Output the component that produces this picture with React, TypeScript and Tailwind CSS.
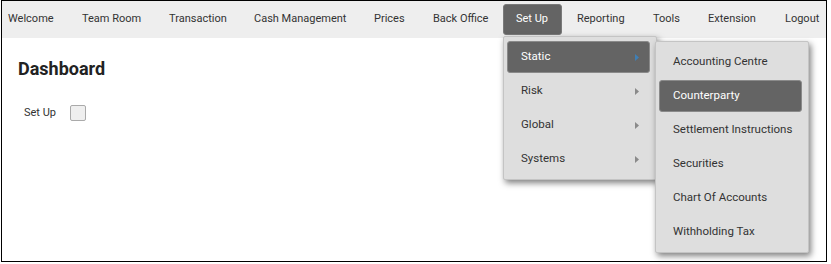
import React from "react";

const navItems = [
  { label: "Welcome", w: "w-[74px]" },
  { label: "Team Room", w: "w-[87px]" },
  { label: "Transaction", w: "w-[85px]" },
  { label: "Cash Management", w: "w-[120px]" },
  { label: "Prices", w: "w-[59px]" },
  { label: "Back Office", w: "w-[71px]" },
];

const navRight = [
  { label: "Reporting", w: "w-[76px]" },
  { label: "Tools", w: "w-[55px]" },
  { label: "Extension", w: "w-[77px]" },
  { label: "Logout", w: "w-[40px]" },
];

const mainMenu = ["Static", "Risk", "Global", "Systems"];
const staticMenu = [
  "Accounting Centre",
  "Counterparty",
  "Settlement Instructions",
  "Securities",
  "Chart Of Accounts",
  "Withholding Tax",
];

function Arrow({ active }: { active?: boolean }) {
  return (
    <svg width="4" height="7" viewBox="0 0 4 7" className="shrink-0">
      <path d="M0 0 L4 3.5 L0 7 Z" fill={active ? "#3f7fb5" : "#8a8a8a"} />
    </svg>
  );
}

function MenuItem({
  label,
  active,
  arrow,
}: {
  label: string;
  active?: boolean;
  arrow?: boolean;
}) {
  return (
    <div
      className={`h-8 flex items-center justify-between pl-[13px] pr-[10px] rounded-[3px] border whitespace-nowrap ${
        active
          ? "bg-[#646464] text-white border-[#8a8a8a]"
          : "text-[#333] border-transparent"
      }`}
    >
      <span>{label}</span>
      {arrow && <Arrow active={active} />}
    </div>
  );
}

export default function App() {
  return (
    <div
      className="bg-white w-[831px] h-[264px] pl-[1px]"
      style={{ fontFamily: "Roboto, 'Liberation Sans', sans-serif" }}
    >
      <div className="w-[826px] h-[262px] border border-black">
        <nav className="h-[37px] bg-[#eeeeee] flex items-center pl-[6px] text-[11px] text-[#333]">
          {navItems.map((n) => (
            <span key={n.label} className={`${n.w} shrink-0 whitespace-nowrap`}>
              {n.label}
            </span>
          ))}
          <div className="w-[74px] shrink-0 relative -ml-[1px]">
            <div className="w-[59px] h-[31px] flex items-center px-3 bg-[#646464] text-white rounded-[3px] border border-[#7a7a7a] whitespace-nowrap">
              Set Up
            </div>
            <div className="absolute left-0 top-[32px] z-10 w-[154px] bg-[#dedede] border border-[#c4c4c4] rounded-[2px] pt-1 pb-1 pl-[3px] pr-[6px] flex flex-col gap-0.5 shadow-[2px_3px_6px_rgba(0,0,0,0.5)] text-[11.5px]">
              {mainMenu.map((m, i) => (
                <MenuItem key={m} label={m} active={i === 0} arrow />
              ))}
              <div className="absolute left-[151px] top-[4px] w-[154px] bg-[#dedede] border border-[#c4c4c4] rounded-[2px] pt-1 pb-1 pl-[3px] pr-[6px] flex flex-col gap-0.5 shadow-[2px_3px_6px_rgba(0,0,0,0.5)]">
                {staticMenu.map((m, i) => (
                  <MenuItem key={m} label={m} active={i === 1} />
                ))}
              </div>
            </div>
          </div>
          {navRight.map((n) => (
            <span key={n.label} className={`${n.w} shrink-0 whitespace-nowrap`}>
              {n.label}
            </span>
          ))}
        </nav>

        <div className="pl-[16px] pt-[19px]">
          <h1 className="text-[18px] font-bold text-[#222] leading-[24px]">
            Dashboard
          </h1>
          <div className="flex items-center mt-[24px] pl-[6px]">
            <span className="text-[11px] text-[#333] w-[46px]">Set Up</span>
            <div className="w-4 h-4 bg-[#efefef] border border-[#aaa] rounded-[2px]" />
          </div>
        </div>
      </div>
    </div>
  );
}
